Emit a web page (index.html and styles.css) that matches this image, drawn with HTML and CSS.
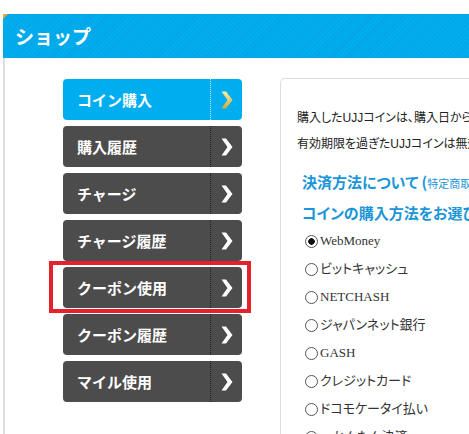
FILE: index.html
```html
<!DOCTYPE html>
<html>
	<head>
		<meta charset="UTF-8">
		<title>ショップ</title>
		<link rel="stylesheet" href="styles.css">
	</head>
	<body>
		<div class="shop">
			<h1 class="shop-title">ショップ</h1>
			<div class="shop-body">
				<ul class="menu">
					<li class="menu-item is-current">
						<span class="label">コイン購入</span>
						<span class="arrow"><svg width="12" height="18" viewBox="0 0 12 18"><defs><linearGradient id="gold" x1="0" y1="0" x2="0" y2="1"><stop offset="0" stop-color="#fbf1a8"/><stop offset="1" stop-color="#cfa83c"/></linearGradient></defs><polygon points="0.5,0.5 5,0.5 11.5,9 5,17.5 0.5,17.5 6.5,9" fill="url(#gold)"/></svg></span>
					</li>
					<li class="menu-item">
						<span class="label">購入履歴</span>
						<span class="arrow"><svg width="12" height="18" viewBox="0 0 12 18"><polygon points="0.5,0.5 5,0.5 11.5,9 5,17.5 0.5,17.5 6.5,9" fill="#fff"/></svg></span>
					</li>
					<li class="menu-item">
						<span class="label">チャージ</span>
						<span class="arrow"><svg width="12" height="18" viewBox="0 0 12 18"><polygon points="0.5,0.5 5,0.5 11.5,9 5,17.5 0.5,17.5 6.5,9" fill="#fff"/></svg></span>
					</li>
					<li class="menu-item">
						<span class="label">チャージ履歴</span>
						<span class="arrow"><svg width="12" height="18" viewBox="0 0 12 18"><polygon points="0.5,0.5 5,0.5 11.5,9 5,17.5 0.5,17.5 6.5,9" fill="#fff"/></svg></span>
					</li>
					<li class="menu-item is-marked">
						<span class="label">クーポン使用</span>
						<span class="arrow"><svg width="12" height="18" viewBox="0 0 12 18"><polygon points="0.5,0.5 5,0.5 11.5,9 5,17.5 0.5,17.5 6.5,9" fill="#fff"/></svg></span>
					</li>
					<li class="menu-item">
						<span class="label">クーポン履歴</span>
						<span class="arrow"><svg width="12" height="18" viewBox="0 0 12 18"><polygon points="0.5,0.5 5,0.5 11.5,9 5,17.5 0.5,17.5 6.5,9" fill="#fff"/></svg></span>
					</li>
					<li class="menu-item">
						<span class="label">マイル使用</span>
						<span class="arrow"><svg width="12" height="18" viewBox="0 0 12 18"><polygon points="0.5,0.5 5,0.5 11.5,9 5,17.5 0.5,17.5 6.5,9" fill="#fff"/></svg></span>
					</li>
				</ul>

				<div class="content">
					<p class="note">購入したUJJコインは、購入日から90日間有効です。</p>
					<p class="note">有効期限を過ぎたUJJコインは無効となります。</p>
					<h2 class="sub-title">決済方法について (<small>特定商取引法に基づく表記</small>)</h2>
					<h2 class="sub-title">コインの購入方法をお選びください</h2>
					<ul class="pay-list">
						<li><label><input type="radio" name="pay" checked>WebMoney</label></li>
						<li><label><input type="radio" name="pay">ビットキャッシュ</label></li>
						<li><label><input type="radio" name="pay">NETCHASH</label></li>
						<li><label><input type="radio" name="pay">ジャパンネット銀行</label></li>
						<li><label><input type="radio" name="pay">GASH</label></li>
						<li><label><input type="radio" name="pay">クレジットカード</label></li>
						<li><label><input type="radio" name="pay">ドコモケータイ払い</label></li>
						<li><label><input type="radio" name="pay">auかんたん決済</label></li>
					</ul>
				</div>
			</div>
		</div>
	</body>
</html>
```

FILE: styles.css
```css
* {
	margin: 0;
	padding: 0;
}

body {
	background-color: #ffffff;
	font-family: "Liberation Sans", "Noto Sans CJK JP", sans-serif;
	overflow: hidden;
}

ul {
	list-style: none;
}

.shop {
	margin-top: 14px;
	margin-left: 3px;
}

/*見出し*/
.shop-title {
	position: relative;
	height: 44px;
	padding-left: 12px;
	line-height: 44px;
	font-size: 19px;
	font-weight: bold;
	color: #ffffff;
	font-family: "Noto Sans CJK JP", sans-serif;
	background-color: #00adef;
	background-image: repeating-linear-gradient(135deg, #00adef 0, #00adef 2px, #07a4e4 2px, #07a4e4 3px);
}

.shop-title:before {
	content: "";
	position: absolute;
	left: 0;
	top: 0;
	width: 0;
	height: 0;
	border-top: 5px solid #f2a23a;
	border-right: 5px solid transparent;
}

.shop-body {
	display: flex;
	align-items: flex-start;
	height: 400px;
	border-left: 2px solid #dedede;
}

/*メニュー*/
.menu {
	display: flex;
	flex-direction: column;
	gap: 6px;
	width: 179px;
	margin-top: 21px;
	margin-left: 58px;
}

.menu-item {
	position: relative;
	display: flex;
	height: 41px;
	border-radius: 4px;
	background-color: #4c4c4c;
	color: #ffffff;
	font-family: "Noto Sans CJK JP", sans-serif;
	font-size: 15px;
	font-weight: bold;
}

.menu-item .label {
	flex: 1;
	padding-left: 14px;
	line-height: 41px;
}

.menu-item .arrow {
	display: flex;
	align-items: center;
	justify-content: center;
	width: 31px;
	border-left: 1px dotted #1e1e1e;
}

.menu-item.is-current {
	background-color: #00aef0;
}

.menu-item.is-current .arrow {
	border-left-color: #bfe9fb;
}

.menu-item.is-marked:after {
	content: "";
	position: absolute;
	left: -14px;
	right: -9px;
	top: -6px;
	bottom: -5px;
	border: 4px solid #e3222b;
}

/*本文*/
.content {
	flex: 1;
	height: 420px;
	margin-top: 20px;
	margin-left: 38px;
	padding: 26px 0 0 16px;
	border: 1px solid #dddddd;
	border-right: none;
	border-radius: 5px 0 0 0;
	white-space: nowrap;
	overflow: hidden;
}

.note {
	line-height: 26px;
	font-size: 12px;
	color: #222222;
	font-feature-settings: "palt";
}

.sub-title {
	margin-top: 10px;
	padding-left: 5px;
	line-height: 29px;
	font-size: 15px;
	font-weight: bold;
	color: #1b95d8;
	font-family: "Noto Sans CJK JP", sans-serif;
	font-feature-settings: "palt";
}

.sub-title + .sub-title {
	margin-top: 0;
}

.sub-title small {
	font-size: 11px;
	font-weight: normal;
}

.pay-list {
	padding-left: 8px;
}

.pay-list li {
	height: 28px;
	line-height: 28px;
	font-size: 13px;
	color: #333333;
	font-family: "Liberation Serif", "Noto Sans CJK JP", serif;
	font-feature-settings: "palt";
}

.pay-list label {
	display: flex;
	align-items: center;
}

.pay-list input {
	appearance: none;
	-webkit-appearance: none;
	width: 13px;
	height: 13px;
	margin-right: 2px;
	border: 1px solid #555555;
	border-radius: 50%;
	background-color: #ffffff;
}

.pay-list input:checked {
	background-image: radial-gradient(circle, #111111 0, #111111 3px, transparent 3.5px);
}
```
